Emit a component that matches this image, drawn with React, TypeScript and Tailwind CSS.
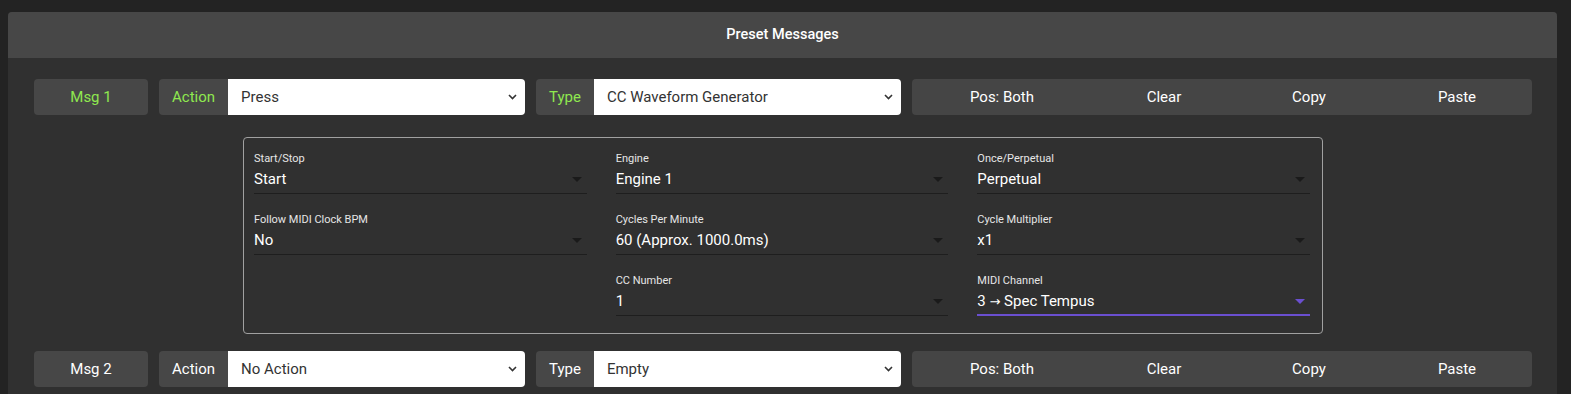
import React from "react";

const Chevron = () => (
  <svg width="9" height="6" viewBox="0 0 9 6" className="shrink-0">
    <path d="M1 1l3.5 3.5L8 1" fill="none" stroke="#333" strokeWidth="1.6" />
  </svg>
);

const Caret = ({ active }: { active?: boolean }) => (
  <svg width="10" height="5" viewBox="0 0 10 5" className="shrink-0">
    <path d="M0 0h10L5 5z" fill={active ? "#6a4fd0" : "#1a1a1a"} />
  </svg>
);

const LabeledSelect = ({ label, value, green }: { label: string; value: string; green?: boolean }) => (
  <div className="flex h-[36px] rounded-[4px] overflow-hidden">
    <div className={`flex items-center px-[13px] bg-[#474747] text-[15px] ${green ? "text-[#8fe84f]" : "text-white"}`}>
      {label}
    </div>
    <div className="flex flex-1 items-center justify-between bg-white pl-[13px] pr-[8px] text-[15px] text-[#333]">
      <span>{value}</span>
      <Chevron />
    </div>
  </div>
);

const MsgRow = ({ n, action, type, green }: { n: number; action: string; type: string; green?: boolean }) => (
  <div className="grid grid-cols-[114px_366px_365px_1fr] gap-[11px]">
    <div className={`flex h-[36px] items-center justify-center rounded-[4px] bg-[#474747] text-[15px] ${green ? "text-[#8fe84f]" : "text-white"}`}>
      Msg {n}
    </div>
    <LabeledSelect label="Action" value={action} green={green} />
    <LabeledSelect label="Type" value={type} green={green} />
    <div className="flex h-[36px] items-center rounded-[4px] bg-[#454545] text-[15px] text-white">
      <div className="ml-[35px] w-[110px] text-center">Pos: Both</div>
      <div className="ml-[52px] w-[110px] text-center">Clear</div>
      <div className="ml-[35px] w-[110px] text-center">Copy</div>
      <div className="ml-[38px] w-[110px] text-center">Paste</div>
    </div>
  </div>
);

const Field = ({ label, value, active }: { label: string; value: React.ReactNode; active?: boolean }) => (
  <div className="flex flex-col">
    <div className="text-[11px] leading-[14px] text-[#e6e6e6]">{label}</div>
    <div
      className={`flex h-[28px] items-center justify-between pr-[5px] text-[15px] text-white ${
        active ? "border-b-2 border-[#6a4fd0]" : "border-b border-[#1e1e1e]"
      }`}
    >
      <span>{value}</span>
      <Caret active={active} />
    </div>
  </div>
);

export default function App() {
  return (
    <div className="min-h-screen bg-[#232323] pt-[12px] pl-[8px] pr-[14px]" style={{ fontFamily: "Roboto, 'Liberation Sans', sans-serif" }}>
      <div className="rounded-t-[4px] bg-[#303030]">
        <div className="flex h-[46px] items-center justify-center rounded-t-[4px] bg-[#474747] text-[14.5px] font-medium text-white">
          Preset Messages
        </div>
        <div className="pt-[21px] pl-[26px] pr-[25px] pb-[20px]">
          <MsgRow n={1} action="Press" type="CC Waveform Generator" green />
          <div className="mt-[22px] ml-[209px] w-[1080px] rounded-[4px] border border-[#a0a0a0] pl-[10px] pr-[12px] pt-[14px] pb-[17px]">
            <div className="grid grid-cols-3 gap-x-[29px] gap-y-[19px]">
              <Field label="Start/Stop" value="Start" />
              <Field label="Engine" value="Engine 1" />
              <Field label="Once/Perpetual" value="Perpetual" />
              <Field label="Follow MIDI Clock BPM" value="No" />
              <Field label="Cycles Per Minute" value="60 (Approx. 1000.0ms)" />
              <Field label="Cycle Multiplier" value="x1" />
              <div />
              <Field label="CC Number" value="1" />
              <Field
                label="MIDI Channel"
                value={
                  <>
                    3 <span className="font-['DejaVu_Sans',sans-serif] text-[13px]">→</span> Spec Tempus
                  </>
                }
                active
              />
            </div>
          </div>
          <div className="mt-[17px]">
            <MsgRow n={2} action="No Action" type="Empty" />
          </div>
        </div>
      </div>
    </div>
  );
}
